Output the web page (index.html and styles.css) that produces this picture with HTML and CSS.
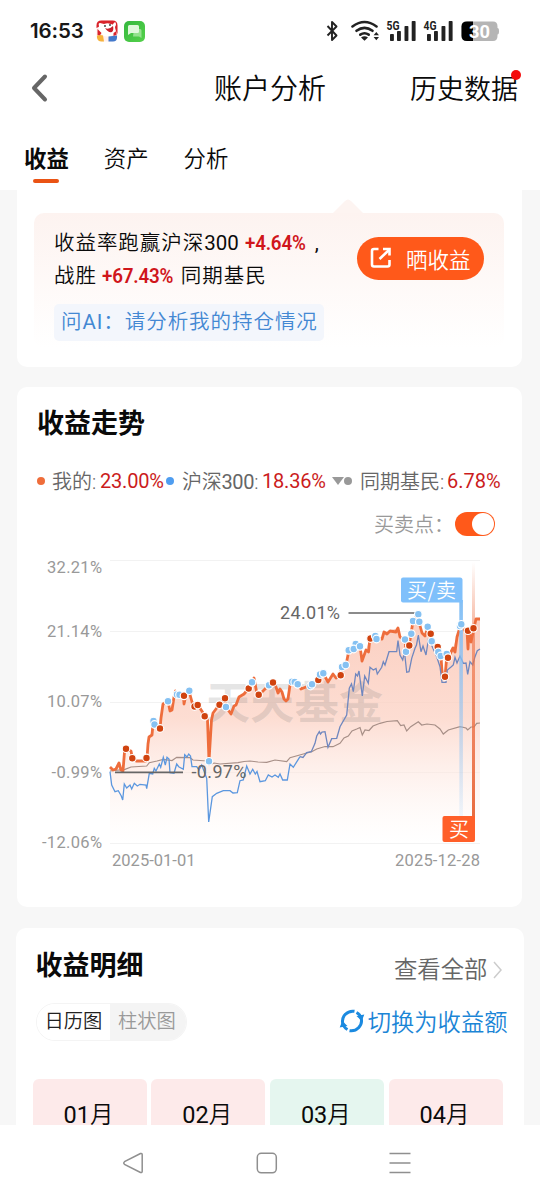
FILE: index.html
```html
<!DOCTYPE html>
<html lang="zh-CN">
<head>
<meta charset="utf-8">
<title>账户分析</title>
<link rel="stylesheet" href="styles.css">
</head>
<body>
<div class="phone">
  <header class="statusbar">
    <span class="clock">16:53</span>
    <svg class="app-icon" width="22" height="22" viewBox="0 0 22 22">
      <rect x=".5" y=".5" width="21" height="21" rx="5" fill="#fff0ee"/>
      <path d="M.5 8V5.500q0-5 5-5h11q5 0 5 5V14l-2-4-4-6-9 1z" fill="#d9232b"/>
      <path d="M3 6q-1-3 1-3l4 1q5-2 8 1l3-3q2 2 0 5 2 6-4 9-7 2-10-3Q2 10 3 6z" fill="#fff"/>
      <path d="M1.500 9l4 4-2 3-2-1zM17.500 13l3-2v4l-3 1z" fill="#d9232b"/>
      <path d="M9 8q4 2 8-2 1 4-1 6-4 1-7-4z" fill="#c8202b"/>
      <circle cx="9" cy="6" r=".9" fill="#333"/><circle cx="14" cy="5" r=".9" fill="#333"/>
      <path d="M1 15.500q4-1 6 0l1 6H5.500q-4 0-4.500-4z" fill="#f6b33c"/>
      <path d="M12.500 16.500l8.500-1v2q0 4-4 4h-4.500z" fill="#4279cc"/>
    </svg>
    <svg class="app-icon app-icon-msg" width="21" height="21" viewBox="0 0 21 21">
      <defs><linearGradient id="msg" x1="0" y1="0" x2="1" y2="1"><stop stop-color="#35b83e"/><stop offset="1" stop-color="#55d14b"/></linearGradient></defs>
      <rect width="21" height="21" rx="5" fill="url(#msg)"/>
      <path d="M10 8h6q1.500 0 1.500 1.500V17l-2.500-1.500H9z" fill="#94e28e"/>
      <path d="M5.500 4h8q1.500 0 1.500 1.500v5q0 1.500-1.500 1.500H7l-3 2V5.500Q4 4 5.500 4z" fill="#e0f8dc"/>
    </svg>
    <svg class="sys-icons" width="176" height="24" viewBox="324 19 176 24">
      <path d="M327.500 26l9 9.500-4.500 4.500V22l4.500 4.500-9 9" fill="none" stroke="#222" stroke-width="1.900" stroke-linejoin="round"/>
      <g fill="none" stroke="#222" stroke-width="2.600" stroke-linecap="round">
        <path d="M352.500 26.500q12-9 24 0"/><path d="M356.500 30.800q8-6 16 0"/><path d="M360.300 34.700q4.200-2.800 8.400 0"/>
      </g>
      <path d="M361 37.500q3.500-2.300 7 0l-3.500 3.300z" fill="#222"/>
      <path d="M376.300 32l2.700 3.300h-5.400zM376.300 40.300l2.700-3.300h-5.400z" fill="#222"/>
      <g fill="#222">
        <rect x="390" y="34" width="3.900" height="7" rx=".8"/><rect x="397" y="31" width="3.900" height="10" rx=".8"/><rect x="404.500" y="26" width="3.900" height="15" rx=".8"/><rect x="411.700" y="21" width="3.900" height="20" rx=".8"/>
        <rect x="427" y="34" width="3.900" height="7" rx=".8"/><rect x="434" y="31" width="3.900" height="10" rx=".8"/><rect x="441.500" y="26" width="3.900" height="15" rx=".8"/><rect x="448.700" y="21" width="3.900" height="20" rx=".8"/>
      </g>
      <g class="net-label"><text x="386.500" y="29.500" textLength="13" lengthAdjust="spacingAndGlyphs">5G</text><text x="423.500" y="29.500" textLength="13" lengthAdjust="spacingAndGlyphs">4G</text></g>
      <path d="M467 21.500h26q4.500 0 4.500 5v1.500q1.500 0 1.500 3.300t-1.500 3.300v1.400q0 5-4.500 5h-26q-5.500 0-5.500-5v-9.500q0-5 5.500-5z" fill="#b5b5b5"/>
      <path d="M473 21.500h-6q-5.500 0-5.500 5V36q0 5 5.500 5h6z" fill="#000"/>
      <text class="battery" x="469" y="37.500" textLength="21" lengthAdjust="spacingAndGlyphs">30</text>
    </svg>
  </header>

  <nav class="titlebar">
    <svg width="18" height="30" viewBox="0 0 18 30"><path d="M15 3.500L4 15l11 11.500" fill="none" stroke="#666" stroke-width="4" stroke-linecap="round" stroke-linejoin="round"/></svg>
    <h1 class="page-title">账户分析</h1>
    <span class="history">历史数据<i class="red-dot"></i></span>
  </nav>

  <nav class="tabs">
    <span class="tab tab-active">收益</span><span class="tab">资产</span><span class="tab">分析</span>
  </nav>

  <main class="content">
    <section class="card card-summary">
      <svg class="pointer" width="30" height="14" viewBox="0 0 30 14"><path d="M0 14L12 2q3-3 6 0l12 12z" fill="#fdf4f1"/></svg>
      <div class="beat">
        <div class="beat-copy">
          <p>收益率跑赢沪深<span class="num num-index">300</span> <b class="gain gain-a">+4.64%</b><span class="num comma">,</span></p>
          <p>战胜 <b class="gain gain-b">+67.43%</b> 同期基民</p>
          <p class="ask">问<span class="num">AI</span>：请分析我的持仓情况</p>
        </div>
        <div class="share">
          <svg width="22" height="22" viewBox="0 0 22 22" fill="none" stroke="#fff" stroke-width="2.600"><path d="M8.500 2H4Q2 2 2 4v13.500q0 2 2 2h13.500q2 0 2-2V13"/><path d="M9.500 12L19 3"/><path d="M13 2h6.500v6.500"/></svg>
          <span>晒收益</span>
        </div>
      </div>
    </section>

    <section class="card card-trend">
      <h2 class="card-title">收益走势</h2>
      <div class="legend">
        <i class="dot dot-mine"></i><span class="lg lg-mine">我的:</span><span class="pct pct-mine">23.00%</span>
        <i class="dot dot-hs"></i><span class="lg lg-hs">沪深<span class="num">300</span>:</span><span class="pct pct-hs">18.36%</span>
        <i class="caret"></i><i class="dot dot-peer"></i><span class="lg lg-peer">同期基民:</span><span class="pct pct-peer">6.78%</span>
      </div>
      <div class="points"><span>买卖点：</span><i class="switch"></i></div>
      <svg class="chart" width="505" height="332" viewBox="17 545 505 332">
        <defs>
          <linearGradient id="area" gradientUnits="userSpaceOnUse" x1="0" y1="615" x2="0" y2="843"><stop stop-color="#fac6b5" stop-opacity=".85"/><stop offset=".45" stop-color="#fcd2c4" stop-opacity=".76"/><stop offset="1" stop-color="#fff" stop-opacity=".3"/></linearGradient>
          <linearGradient id="buy" gradientUnits="userSpaceOnUse" x1="0" y1="562" x2="0" y2="820"><stop stop-color="#ee7044" stop-opacity="0"/><stop offset=".3" stop-color="#ee7044" stop-opacity=".6"/><stop offset="1" stop-color="#e8693c"/></linearGradient>
          <linearGradient id="sell" gradientUnits="userSpaceOnUse" x1="0" y1="600" x2="0" y2="825"><stop stop-color="#83bff5"/><stop offset="1" stop-color="#83bff5" stop-opacity=".08"/></linearGradient>
        </defs>
        <path d="M110 560.500H480M110 631.500H480M110 702.500H480M110 772.500H480M110 843.500H480" stroke="#f2f2f2" fill="none"/>
        <path fill="url(#area)" d="M110 767L113 770 119 763 123 771 126 749 132 757 140 761 147 758 149 737 153 728 154 722 160 728 163.500 704 168 701 171 711 175.500 691 183 697 189 691 194 707 198 705 205 716 207.500 720 209 761 212 716 219 705 225 698 231 714 234 706 239 697 244 694 249 688 254 678 257 694 269 685 273 682 278 693 282 691 286 701 290 685 295 682 301 689 312 684 318 681 323 673 328 682 333 674 336 678 341 675 346 665 349 650 356 644 360 646 362 661 366 650 370 638 382 639 384 632 398 628 400 637 405 640 406 652 411 634 413 621 418 614 422 633 425 636 428 627 432 641 438 649 441 660 445 677 447 654 453 648 457 637 461 624 465 630 468 649 474 628 476 619 480 619V843H110z"/>
        <text class="watermark" x="206" y="719" textLength="177">天天基金</text>
        <path d="M110 771L125 769.300 131 767 146.700 766 149.300 762.700 157 761 163.300 759.300 172 760.500 176.700 757.300 190 757.700 193 760 207 761 209 765 214 763 220 764 238 762.700 244 761.500 250 761 258 762 266.700 762.300 275 760 286.700 761.700 290 757.700 303.300 754 311.700 751.700 316.700 749 325 746.500 333 746.700 340 743.300 344 738 348.300 736 352 731 356.700 729 360 727.500 362.300 735 365 730 369 730.500 373 726 380 723.300 387 721.500 397.300 720.700 400.700 725.700 404 725 406.700 731 410.700 726.700 418.300 721.700 421.700 725 427 724 435 725 440 729 443.300 734 448.300 730 460 726.700 466 728 467.700 730 471 727 474 727 476.700 723.300 480 723" fill="none" stroke="#a78f87" stroke-width="1.200"/>
        <path d="M110 767L113 770 116 769 119 763 121 770 123 771 124.500 752 126 749 131 751 132.300 758 136 761 140 761 146 761 147 758 148 744 149 737 152 735 153 724 154.500 721 160 728.500 161 718 163 704 168 701 170 711 172 710 174 697 175.500 691 179 695 183.500 696 184 704 186 695 189 691 192 702 194 707 198 705 205 716 207.500 720 209 761 211.500 720 213 713 219 705 225 698 226 707 231 714 234 706 236 705 239 697 244 694 249 688 252 683 254 678 257 694 259 695 269 685 273 682 276 687 278 693 280 689 282 692 284 699 286 701 288 699 290 685 295 682 298 684 301 689 306 687 312 684 318 681 319 674 323 673 328 682 333 674 336 678 341 675 341 667 346 665 349 650 354 649 356 644 360 646 362 661 366 650 368.500 652 370 638 375 636 377 639 382 639 384 632 387 634 390 631 396 632 398 628 400 637 405 640 406 652 409 646 411 634 413 621 418 614 419 622 422 633 425 636 428 627 431 634 432 641 438 647 439 652 441 656 442 672 445 677 447 654 448 658 453 648 455 652 457 637 461 624 464 630 467 631 468 649 469 631 471 642 474 628 476 619 480 619" fill="none" stroke="#ee6d3c" stroke-width="2.800" stroke-linejoin="round"/>
        <path d="M300 756.700L303 757.500 306.700 752.700 311.300 751.700 315 743.300 316.700 736 319.300 731.700 320.500 734 322 732 325 731.700 328 747.300 331.700 738.700 336.700 738.300 340 726.700 346.700 715 349.300 688.300 351.500 684 353.300 691.700 355.700 674 357.500 676 359 671 362.300 696 364.700 676 368.300 683.300 370 667.300 373.300 670 376 668.500 377.300 674 381.700 667.300 383.300 661.700 385 665 386.500 660 389 651.700 396.700 651.700 398 640.700 400 655 402.700 660 404.500 652 406.700 672.300 409 671.700 411.700 658.300 415 648.300 416.500 645 418.300 635 421 651.700 423 646 426 655 428.300 640 431.500 645 436.700 656.700 440 666.700 442 682.300 446 682.300 447.300 670 451 667 453.300 665 455 657.300 457 663 460 656 463.300 663.300 466 663 467.700 674.300 470 661.700 472.700 665 475 656.700 477.300 650.700 480 649" fill="none" stroke="#6f87bf" stroke-width="1.300"/>
        <path d="M110 771.700L111.700 785 115 791.700 118.300 790.700 121.300 796 122.700 800 124.300 784 126.700 788 130 785 131.700 789 134.300 783.300 137.300 786 140 784.300 146 785 146.700 788.700 149.300 773.300 152.700 774 154.300 768.300 156 771 159.300 764 160.700 767.300 163.300 757.300 165.300 765 167 757.300 169 759 170 772.700 174 773.300 176.700 764 178.700 766.700 183.300 769.300 184.700 754.700 187 757 188.700 754 190.500 756 192 766.700 196.700 766.700 199 770 201.700 765 206.700 778.300 208.700 822 212.300 796.700 216.700 793.300 223.300 790.700 230 790.700 233 793 237.300 792.700 240 780.700 243.300 780 246.700 766 250 774 252.700 769.300 255.300 774 257 771.500 260 781.700 265.300 780.700 268.300 775 272 777 275 775 278.300 777.300 280 774 282.700 780 287.300 780 290 764 293.300 767.300 300 756.700" fill="none" stroke="#5b97df" stroke-width="1.300"/>
        <rect x="459.300" y="600" width="3.600" height="225" fill="url(#sell)"/>
        <rect x="472" y="562" width="3" height="258" fill="url(#buy)"/>
        <path d="M348.500 613H418M115 772.300H183" stroke="#666" stroke-width="1.700"/>
        <g class="marks">
          <g fill="#85c1f2"><circle cx="153.500" cy="721" r="3.800"/><circle cx="154.500" cy="724.500" r="3.800"/><circle cx="168" cy="701.300" r="3.800"/><circle cx="177" cy="694.500" r="3.800"/><circle cx="179.500" cy="694.700" r="3.800"/></g>
          <g fill="#d0430f"><circle cx="126" cy="748.700" r="3.800"/><circle cx="132.300" cy="758.300" r="3.800"/><circle cx="146.500" cy="758" r="3.800"/><circle cx="160" cy="728.500" r="3.800"/><circle cx="184" cy="695.800" r="3.800"/><circle cx="194.500" cy="706.500" r="3.800"/><circle cx="197.700" cy="705" r="3.800"/><circle cx="204.700" cy="716.300" r="3.800"/><circle cx="219.500" cy="704.700" r="3.800"/><circle cx="225" cy="698.200" r="3.800"/><circle cx="248.700" cy="688.500" r="3.800"/><circle cx="258.700" cy="694.700" r="3.800"/></g>
          <g fill="#85c1f2"><circle cx="189.300" cy="690.700" r="3.800"/><circle cx="209" cy="761.300" r="3.800"/><circle cx="226" cy="707" r="3.800"/><circle cx="252" cy="682.300" r="3.800"/><circle cx="269" cy="685.300" r="3.800"/><circle cx="292" cy="681.700" r="3.800"/><circle cx="294.700" cy="682" r="3.800"/><circle cx="297.700" cy="684.300" r="3.800"/><circle cx="310.500" cy="686" r="3.800"/><circle cx="312" cy="684.300" r="3.800"/></g>
          <g fill="#d0430f"><circle cx="273" cy="682.500" r="3.800"/><circle cx="318.300" cy="680" r="3.800"/></g>
          <g fill="#85c1f2"><circle cx="320" cy="674.500" r="3.800"/><circle cx="323.300" cy="673.300" r="3.800"/><circle cx="342" cy="667" r="3.800"/><circle cx="345.700" cy="665" r="3.800"/><circle cx="348.700" cy="650.300" r="3.800"/><circle cx="355.700" cy="644" r="3.800"/><circle cx="353.700" cy="649" r="3.800"/><circle cx="360" cy="646.300" r="3.800"/></g>
          <g fill="#d0430f"><circle cx="340.700" cy="675.300" r="3.800"/><circle cx="370.500" cy="638.500" r="3.800"/></g>
          <g fill="#85c1f2"><circle cx="375.300" cy="636" r="3.800"/><circle cx="376.500" cy="639" r="3.800"/><circle cx="405" cy="639.500" r="3.800"/><circle cx="406" cy="651.700" r="3.800"/><circle cx="411.300" cy="633.700" r="3.800"/><circle cx="413" cy="621" r="3.800"/><circle cx="418.300" cy="614.300" r="3.800"/><circle cx="419.300" cy="621.700" r="3.800"/><circle cx="427.700" cy="626.700" r="3.800"/></g>
          <g fill="#d0430f"><circle cx="409.300" cy="645.500" r="3.800"/><circle cx="430.700" cy="633.700" r="3.800"/><circle cx="437.700" cy="647" r="3.800"/></g>
          <g fill="#85c1f2"><circle cx="431.700" cy="641.300" r="3.800"/><circle cx="438.300" cy="652" r="3.800"/><circle cx="440.700" cy="656" r="3.800"/><circle cx="446.700" cy="654" r="3.800"/><circle cx="460" cy="626" r="3.800"/><circle cx="461.300" cy="624.300" r="3.800"/></g>
          <g fill="#d0430f"><circle cx="448" cy="657.700" r="3.800"/><circle cx="445" cy="676.700" r="3.800"/><circle cx="468" cy="630.700" r="3.800"/><circle cx="473.500" cy="628.300" r="3.800"/></g>
        </g>
        <path d="M403 577.500h57q2.500 0 2.500 2.500v22.500H403q-2 0-2-2v-21q0-2 2-2z" fill="#7fc0fb"/>
        <text class="flag" x="407" y="598" textLength="49">买/卖</text>
        <path d="M444.500 816H475v24q0 2-2 2h-28.500q-2 0-2-2v-22q0-2 2-2z" fill="#ff5f29"/>
        <text class="flag" x="449" y="836.500">买</text>
        <g class="axis">
          <text x="47" y="573" textLength="55">32.21%</text>
          <text x="47" y="636.500" textLength="55">21.14%</text>
          <text x="47" y="707" textLength="55">10.07%</text>
          <text x="51.500" y="777.500" textLength="50.500">-0.99%</text>
          <text x="42" y="848" textLength="60">-12.06%</text>
          <text x="112" y="866" textLength="83.500">2025-01-01</text>
          <text x="395" y="866" textLength="85">2025-12-28</text>
        </g>
        <g class="peak"><text x="280" y="618.500" textLength="60">24.01%</text><text x="191.500" y="778" textLength="55">-0.97%</text></g>
      </svg>
    </section>

    <section class="card card-detail">
      <div class="detail-head">
        <h2 class="card-title">收益明细</h2>
        <span class="see-all">查看全部<svg width="12" height="20" viewBox="0 0 12 20"><path d="M2 2l7 8-7 8" fill="none" stroke="#ccc" stroke-width="1.500"/></svg></span>
      </div>
      <div class="detail-tools">
        <div class="segment"><span class="seg seg-on">日历图</span><span class="seg">柱状图</span></div>
        <div class="swap">
          <svg width="26" height="26" viewBox="0 0 26 26"><g fill="none" stroke="#1b8ae0" stroke-width="3"><path d="M8.500 21.500A9.500 9.500 0 0 1 6.500 6.200Q10 2.500 15.500 3.300"/><path d="M17.500 4.500A9.500 9.500 0 0 1 19.500 19.800Q16 23.500 10.500 22.700"/></g><path d="M17.500 8L25.300 6.500l-2.500 6.500zM8.500 18L.7 19.500l2.500-6.500z" fill="#1b8ae0"/></svg>
          <span>切换为收益额</span>
        </div>
      </div>
      <div class="months"><span class="month"><span class="num">01</span>月</span><span class="month"><span class="num">02</span>月</span><span class="month month-loss"><span class="num">03</span>月</span><span class="month"><span class="num">04</span>月</span></div>
    </section>
  </main>

  <footer class="sysnav">
    <svg width="22" height="22" viewBox="0 0 22 22"><path d="M18.500 1.500L2.500 9.700q-1.500 1.300 0 2.600l16 8.200q1.700.5 1.700-1.300V2.800q0-1.800-1.700-1.300z"/></svg>
    <svg width="22" height="22" viewBox="0 0 22 22"><rect x="1.300" y="1.300" width="19" height="19.500" rx="4"/></svg>
    <svg width="22" height="22" viewBox="0 0 22 22"><path d="M.5 1.500h21M.5 11h21M.5 20.500h21"/></svg>
  </footer>
</div>
</body>
</html>
```
FILE: styles.css
```css
* { box-sizing: border-box; }
body { margin: 0; background: #fff; font-family: Roboto, "Noto Sans CJK SC", sans-serif; color: #0a0a0a; }
h1, h2, p { margin: 0; }
i { font-style: normal; }
svg { display: block; flex: none; }
.phone { width: 540px; height: 1200px; display: flex; flex-direction: column; overflow: hidden; background: #fff; white-space: nowrap; }
.num { font-weight: 400; }

.statusbar { height: 62px; display: flex; align-items: center; padding: 0 40px 0 30px; flex: none; }
.clock { font: 600 20.500px/24px Inter, sans-serif; width: 66px; letter-spacing: -0.100px; color: #181818; }
.app-icon-msg { margin-left: 6px; }
.sys-icons { margin-left: auto; }
.net-label { font: 700 12px Roboto, sans-serif; fill: #222; }
.battery { font: 700 18px Roboto, sans-serif; fill: #fff; }

.titlebar { height: 52px; display: flex; align-items: center; padding: 0 22px 0 30px; flex: none; }
.page-title { font-size: 28px; font-weight: 350; line-height: 40px; margin: 4px 0 0 166px; }
.history { margin: 4px 0 0 auto; font-size: 27px; font-weight: 350; line-height: 40px; position: relative; }
.red-dot { position: absolute; width: 10px; height: 10px; border-radius: 50%; background: #f40b0b; right: -3px; top: 0; }

.tabs { height: 76px; display: flex; gap: 35px; padding: 29px 24px 0; flex: none; font-size: 22.400px; line-height: 32px; font-weight: 350; }
.tab { height: 42px; }
.tab-active { font-weight: 700; display: flex; flex-direction: column; align-items: center; }
.tab-active::after { content: ""; width: 26px; height: 4px; border-radius: 2px; background: #ea5314; margin-top: 4px; flex: none; }

.content { height: 935px; flex: none; background: #f7f7f7; padding: 0 16px 0 17px; overflow: hidden; }
.card { background: #fff; border-radius: 10px; width: 505px; }
.card-title { font-size: 27px; line-height: 36px; font-weight: 700; }

.card-summary { height: 176.500px; border-radius: 0 0 10px 10px; padding: 9px 18px 0 17px; }
.pointer { margin-left: 299px; }
.beat { display: flex; justify-content: space-between; height: 135px; padding: 14px 20px 0 20px; border-radius: 10px; background: linear-gradient(#fdf3f0, #fff); }
.beat-copy { font-size: 20.500px; line-height: 33px; font-weight: 350; letter-spacing: .950px; }
.num-index { letter-spacing: 0; margin-right: 1px; }
.gain { color: #d0161b; font-weight: 600; font-size: 20px; letter-spacing: -.200px; display: inline-block; transform-origin: 0 50%; transform: scaleX(.94); }
.gain-a { width: 66px; margin-left: -1px; }
.gain-b { width: 73px; margin-left: -1px; }
.comma { margin-left: 4px; }
.ask { color: #4388d3; background: #f3f6fc; height: 37px; line-height: 37px; border-radius: 5px; margin-top: 11px; width: 270px; padding-left: 7px; }
.share { display: flex; align-items: center; width: 127px; height: 43px; border-radius: 22px; background: #ff591a; color: #fff; padding-left: 13px; gap: 14px; font-size: 21.500px; font-weight: 350; margin-top: 9.500px; }

.card-trend { height: 520px; margin-top: 20.500px; padding-top: 19px; }
.card-trend .card-title { padding-left: 20px; }
.legend { display: flex; align-items: center; height: 28px; margin-top: 24.500px; padding-left: 20px; font-size: 20px; font-weight: 350; color: #666; }
.dot { width: 8px; height: 8px; border-radius: 50%; flex: none; }
.dot-mine { background: #ef6d3a; margin-right: 7px; }
.dot-hs { background: #4f9df0; margin-right: 8px; }
.dot-peer { background: #999; margin-right: 8px; }
.lg-mine { width: 48px; }
.lg-hs { width: 80px; letter-spacing: -.300px; }
.lg-peer { width: 87px; }
.pct { color: #cb1c1c; font-weight: 400; }
.pct-mine { width: 66px; font-size: 20px; letter-spacing: -.200px; }
.pct-hs { width: 70px; font-size: 20px; letter-spacing: -.200px; }
.caret { border: 6px solid transparent; border-top: 8px solid #999; border-bottom: 0; }
.points { display: flex; align-items: center; height: 28px; margin-top: 15px; padding-left: 357px; font-size: 20px; font-weight: 350; color: #999; }
.points span { width: 81px; }
.switch { width: 40px; height: 24px; border-radius: 12px; background: #ff591a; display: flex; justify-content: flex-end; padding: 1px; }
.switch::before { content: ""; width: 22px; height: 22px; border-radius: 50%; background: #fff; }

.chart { margin-top: 7.500px; }
.axis { font: 400 16.500px Roboto, sans-serif; fill: #999; }
.peak { font: 400 18px Roboto, sans-serif; fill: #666; }
.watermark { font: 700 44px "Noto Sans CJK SC", sans-serif; fill: #777; fill-opacity: .2; }
.flag { font: 350 20px "Noto Sans CJK SC", sans-serif; fill: #fff; }
.marks { stroke: #fff; stroke-width: 1.200px; }

.card-detail { width: 508px; margin: 20.500px 0 0 -1.500px; height: 230px; padding: 20px 15px 0 20px; }
.detail-head { display: flex; justify-content: space-between; }
.see-all { display: flex; align-items: center; gap: 4px; font-size: 23.400px; font-weight: 350; line-height: 34px; color: #666; height: 45px; padding-right: 5px; }
.detail-tools { display: flex; justify-content: space-between; align-items: center; height: 38px; margin-top: 10px; }
.segment { display: flex; height: 38px; border: 1px solid #f4f4f4; border-radius: 19px; overflow: hidden; width: 151px; font-size: 19.300px; font-weight: 350; line-height: 36px; }
.seg { width: 76px; padding-left: 8px; background: #f4f4f4; color: #999; }
.seg-on { width: 74px; background: #fff; color: #222; }
.swap { display: flex; align-items: center; gap: 3px; color: #1b85d6; font-size: 23.300px; font-weight: 350; margin: -2px 1px 0 0; }
.months { display: flex; gap: 4.700px; margin: 38px 0 0 -3px; }
.month { width: 114px; height: 90px; border-radius: 6px; background: #fdeaea; text-align: center; font-size: 23.500px; font-weight: 350; line-height: 72px; padding-right: 2px; }
.month-loss { background: #e5f6ef; }

.sysnav { height: 75px; flex: none; display: flex; gap: 111.500px; padding: 26.500px 0 0 122px; background: #fff; }
.sysnav svg { fill: none; stroke: #8f8f8f; stroke-width: 1.500; }
```
